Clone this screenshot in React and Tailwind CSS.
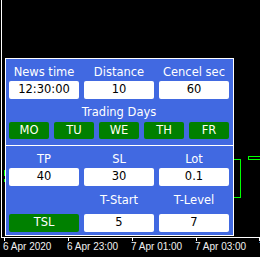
const panelFont = { fontFamily: '"DejaVu Sans", Verdana, sans-serif' };
const axisFont = { fontFamily: '"Liberation Sans", Arial, sans-serif' };

const Field = ({ value, green }) => (
  <div
    className={`h-[18px] rounded-[2px] flex items-center justify-center ${
      green ? "bg-[#008000] text-white" : "bg-white text-black"
    }`}
  >
    {value}
  </div>
);

const Label = ({ children }) => (
  <div className="text-center text-white leading-[14px] whitespace-nowrap">{children}</div>
);

const ChartLines = () => (
  <svg className="absolute inset-0" width="260" height="238" shapeRendering="crispEdges">
    {/* axis frame */}
    <line x1="1.5" y1="0" x2="1.5" y2="238" stroke="#fff" />
    <line x1="1" y1="237.5" x2="260" y2="237.5" stroke="#fff" />
    {/* candle bits */}
    <line x1="4.5" y1="170" x2="4.5" y2="176" stroke="#00ff00" />
    <line x1="4.5" y1="179" x2="4.5" y2="182" stroke="#00ff00" />
    <polyline points="233,159.5 240.5,159.5 240.5,197.5 233,197.5" fill="none" stroke="#00ff00" />
    <rect x="248.5" y="156.5" width="13" height="3" fill="none" stroke="#00ff00" />
  </svg>
);

const Ticks = () => (
  <svg className="absolute left-0 top-[237px]" width="260" height="5" shapeRendering="crispEdges">
    {[4, 68, 132, 196, 259].map((x) => (
      <line key={x} x1={x + 0.5} y1="0" x2={x + 0.5} y2="4" stroke="#fff" />
    ))}
  </svg>
);

export default function App() {
  const days = ["MO", "TU", "WE", "TH", "FR"];
  const axis = ["6 Apr 2020", "6 Apr 23:00", "7 Apr 01:00", "7 Apr 03:00", "7"];

  return (
    <div className="relative w-[260px] h-[257px] bg-black overflow-hidden flex flex-col">
      <div className="relative h-[238px] shrink-0">
        <ChartLines />

        {/* settings panel */}
        <div
          className="absolute left-[5px] top-[58px] w-[229px] h-[178px] border border-white bg-[#4169E1] text-[11.5px] flex flex-col"
          style={panelFont}
        >
          <div className="pt-[6px] pl-[3px] pr-[4px]">
            <div className="grid grid-cols-3 gap-x-[5px]">
              <Label>News time</Label>
              <Label>Distance</Label>
              <Label>Cencel sec</Label>
            </div>
            <div className="grid grid-cols-3 gap-x-[5px] mt-[2px]">
              <Field value="12:30:00" />
              <Field value="10" />
              <Field value="60" />
            </div>
            <div className="mt-[6px]">
              <Label>Trading Days</Label>
            </div>
            <div className="grid grid-cols-5 gap-x-[5px] mt-[3px]">
              {days.map((d) => (
                <div
                  key={d}
                  className="h-[17px] rounded-[2px] bg-[#008000] text-[#fffff0] flex items-center justify-center"
                >
                  {d}
                </div>
              ))}
            </div>
          </div>

          <div className="h-px bg-white mt-[6px]" />

          <div className="pt-[6px] pl-[3px] pr-[4px]">
            <div className="grid grid-cols-3 gap-x-[5px]">
              <Label>TP</Label>
              <Label>SL</Label>
              <Label>Lot</Label>
            </div>
            <div className="grid grid-cols-3 gap-x-[5px] mt-[2px]">
              <Field value="40" />
              <Field value="30" />
              <Field value="0.1" />
            </div>
            <div className="grid grid-cols-3 gap-x-[5px] mt-[7px]">
              <div />
              <Label>T-Start</Label>
              <Label>T-Level</Label>
            </div>
            <div className="grid grid-cols-3 gap-x-[5px] mt-[7px]">
              <Field value="TSL" green />
              <Field value="5" />
              <Field value="7" />
            </div>
          </div>
        </div>
      </div>

      <Ticks />

      {/* time axis */}
      <div className="flex pl-[3px] mt-[3px] text-[10px] leading-[12px] text-[#f0f0f0]" style={axisFont}>
        {axis.map((t) => (
          <div key={t} className="w-[64px] shrink-0 whitespace-nowrap">
            {t}
          </div>
        ))}
      </div>
    </div>
  );
}
